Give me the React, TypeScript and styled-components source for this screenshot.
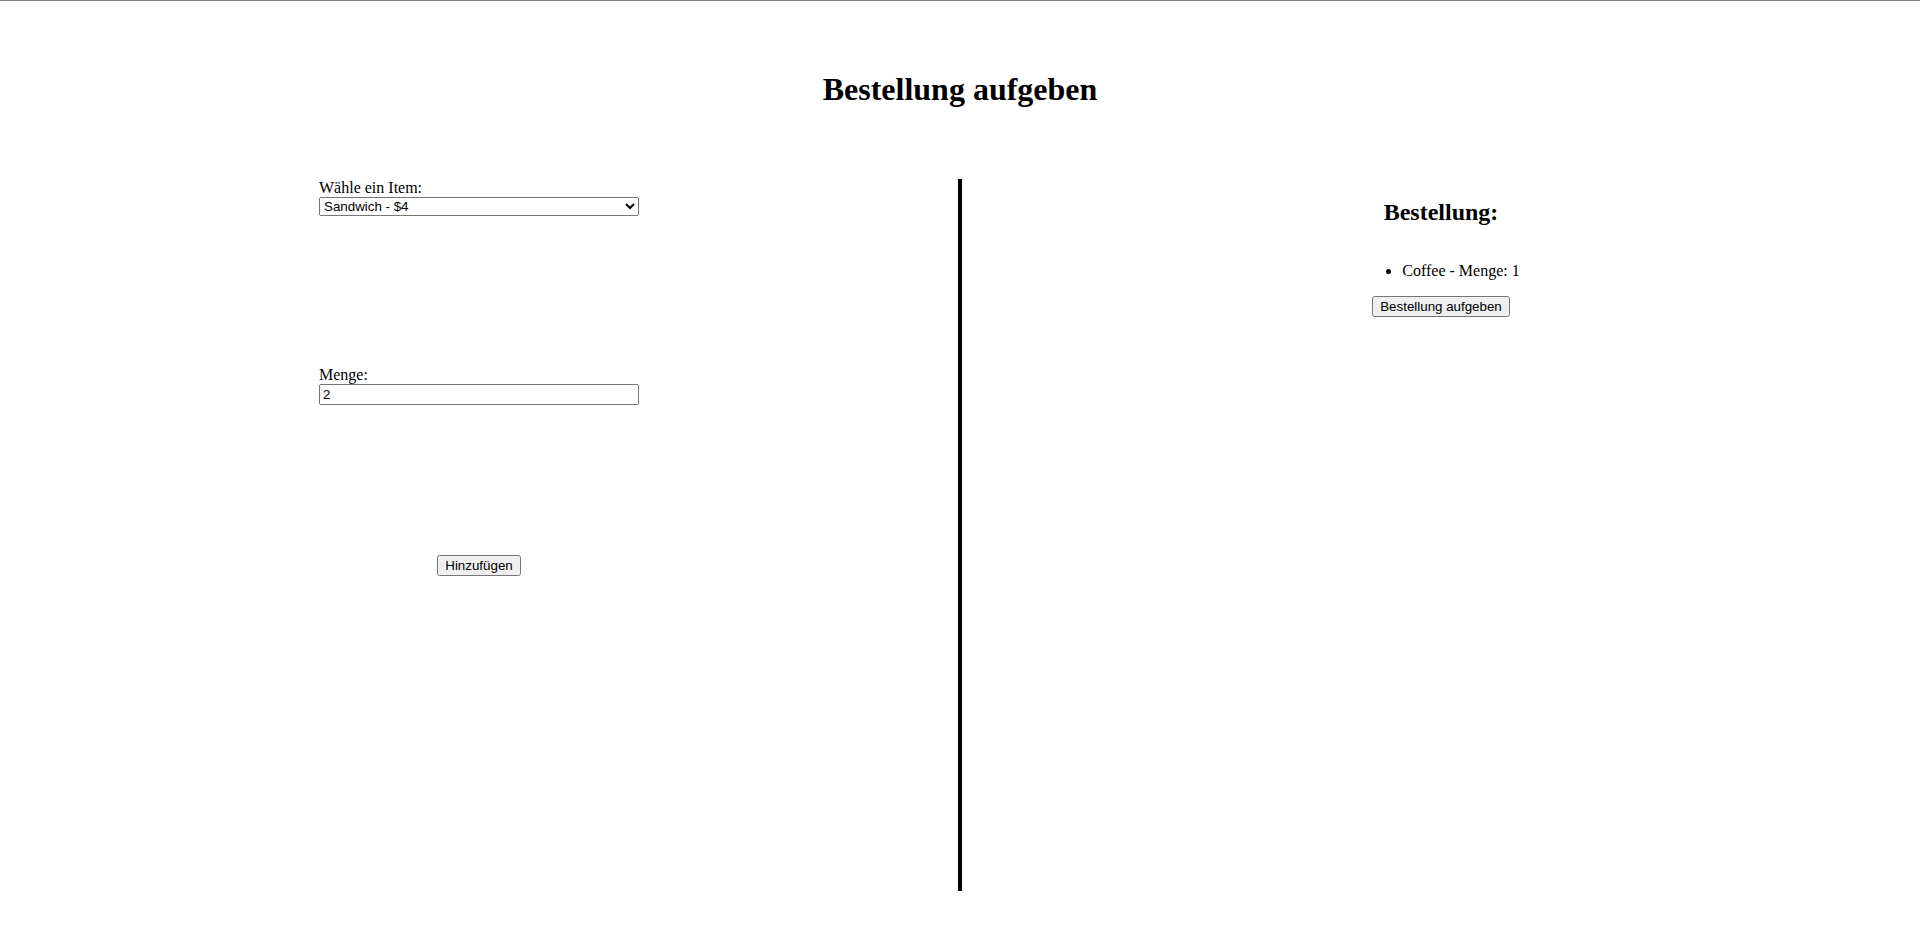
import React, { useState } from "react"
import styled, { createGlobalStyle } from "styled-components"

const GlobalStyle = createGlobalStyle`
  body {
    margin: 0;
    font-family: "Liberation Serif", "Times New Roman", serif;
    font-size: 16px;
    color: #000;
    background: #fff;
  }
`

const Page = styled.div`
  border-top: 1px solid #808080;
  padding-top: 70px;
`

const Title = styled.h1`
  font-size: 32px;
  font-weight: bold;
  text-align: center;
  margin: 0 0 71px;
`

const Columns = styled.div`
  display: flex;
  height: 712px;
`

const OrderForm = styled.div`
  flex: 1;
  border-right: 4px solid #000;
  display: flex;
  flex-direction: column;
  align-items: center;
  gap: 150px;
`

const Field = styled.div`
  width: 320px;

  label {
    display: block;
  }

  select,
  input {
    display: block;
    width: 100%;
    box-sizing: border-box;
    margin: 0;
    font-family: "Liberation Sans", Arial, sans-serif;
    font-size: 13.333px;
  }
`

const Button = styled.button`
  font-family: "Liberation Sans", Arial, sans-serif;
  font-size: 13.333px;
`

const Summary = styled.div`
  flex: 1;
  display: flex;
  flex-direction: column;
  align-items: center;

  h2 {
    font-size: 24px;
    margin: 20px 0;
  }

  ul {
    margin: 16px 0;
    padding-left: 40px;
  }
`

const items = [
  { name: "Coffee", price: 3 },
  { name: "Sandwich", price: 4 },
  { name: "Cake", price: 5 },
]

const App = () => {
  const [item, setItem] = useState("Sandwich")
  const [quantity, setQuantity] = useState("2")
  const [order] = useState([{ name: "Coffee", quantity: 1 }])

  return (
    <Page>
      <GlobalStyle />
      <Title>Bestellung aufgeben</Title>
      <Columns>
        <OrderForm>
          <Field>
            <label htmlFor="item">Wähle ein Item:</label>
            <select id="item" value={item} onChange={e => setItem(e.target.value)}>
              {items.map(i => (
                <option key={i.name} value={i.name}>
                  {i.name} - ${i.price}
                </option>
              ))}
            </select>
          </Field>
          <Field>
            <label htmlFor="quantity">Menge:</label>
            <input
              id="quantity"
              type="text"
              value={quantity}
              onChange={e => setQuantity(e.target.value)}
            />
          </Field>
          <Button>Hinzufügen</Button>
        </OrderForm>
        <Summary>
          <h2>Bestellung:</h2>
          <ul>
            {order.map((o, i) => (
              <li key={i}>
                {o.name} - Menge: {o.quantity}
              </li>
            ))}
          </ul>
          <Button>Bestellung aufgeben</Button>
        </Summary>
      </Columns>
    </Page>
  )
}

export default App
